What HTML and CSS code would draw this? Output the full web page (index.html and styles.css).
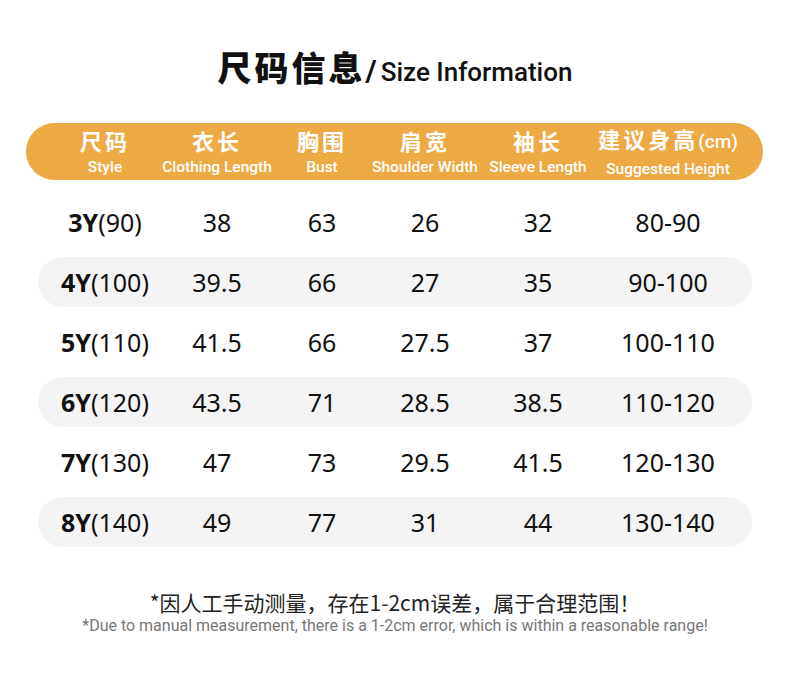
FILE: index.html
```html
<!DOCTYPE html>
<html lang="zh">
<head>
<meta charset="utf-8">
<title>尺码信息</title>
<link rel="stylesheet" href="styles.css">
</head>
<body>
<div class="page">
  <h1 class="title"><span class="title-cn">尺码信息</span><span class="title-slash">/</span><span class="title-en">Size Information</span></h1>

  <div class="head">
    <div class="hcell"><span class="cn">尺码</span><span class="en">Style</span></div>
    <div class="hcell"><span class="cn">衣长</span><span class="en">Clothing Length</span></div>
    <div class="hcell"><span class="cn">胸围</span><span class="en">Bust</span></div>
    <div class="hcell"><span class="cn">肩宽</span><span class="en">Shoulder Width</span></div>
    <div class="hcell"><span class="cn">袖长</span><span class="en">Sleeve Length</span></div>
    <div class="hcell"><span class="cn">建议身高<small>(cm)</small></span><span class="en">Suggested Height</span></div>
  </div>

  <div class="rows">
    <div class="row"><div class="c size"><b>3Y</b>(90)</div><div class="c">38</div><div class="c">63</div><div class="c">26</div><div class="c">32</div><div class="c">80-90</div></div>
    <div class="row alt"><div class="c size"><b>4Y</b>(100)</div><div class="c">39.5</div><div class="c">66</div><div class="c">27</div><div class="c">35</div><div class="c">90-100</div></div>
    <div class="row"><div class="c size"><b>5Y</b>(110)</div><div class="c">41.5</div><div class="c">66</div><div class="c">27.5</div><div class="c">37</div><div class="c">100-110</div></div>
    <div class="row alt"><div class="c size"><b>6Y</b>(120)</div><div class="c">43.5</div><div class="c">71</div><div class="c">28.5</div><div class="c">38.5</div><div class="c">110-120</div></div>
    <div class="row"><div class="c size"><b>7Y</b>(130)</div><div class="c">47</div><div class="c">73</div><div class="c">29.5</div><div class="c">41.5</div><div class="c">120-130</div></div>
    <div class="row alt"><div class="c size"><b>8Y</b>(140)</div><div class="c">49</div><div class="c">77</div><div class="c">31</div><div class="c">44</div><div class="c">130-140</div></div>
  </div>

  <div class="note">
    <p class="note-cn">*因人工手动测量，存在1-2cm误差，属于合理范围！</p>
    <p class="note-en">*Due to manual measurement, there is a 1-2cm error, which is within a reasonable range!</p>
  </div>
</div>
</body>
</html>
```

FILE: styles.css
```css
html, body {
  margin: 0;
  padding: 0;
  background: #ffffff;
}
.page {
  width: 790px;
  height: 698px;
  font-family: "Noto Sans", "Noto Sans CJK SC", sans-serif;
  color: #111;
  overflow: hidden;
}
.title {
  margin: 0;
  padding-top: 50px;
  height: 123px;
  box-sizing: border-box;
  display: flex;
  justify-content: center;
  align-items: baseline;
  font-weight: 700;
  line-height: 1;
  color: #111;
}
.title-cn {
  font-family: "Noto Sans CJK SC", sans-serif;
  font-size: 34px;
  font-weight: 900;
  letter-spacing: 3px;
}
.title-slash {
  font-family: "Roboto", sans-serif;
  font-size: 30px;
  font-weight: 700;
  margin: 0 4px 0 0;
}
.title-en {
  font-family: "Roboto", sans-serif;
  font-size: 26px;
  font-weight: 500;
}
.head {
  margin: 0 27px 0 26px;
  height: 57px;
  border-radius: 29px;
  background: #eda944;
  display: grid;
  grid-template-columns: 134px 90px 120px 86px 140px 120px;
  padding-left: 12px;
  color: #fff;
  align-items: center;
}
.hcell {
  display: flex;
  flex-direction: column;
  align-items: center;
  white-space: nowrap;
}
.hcell .cn {
  font-family: "Noto Sans CJK SC", sans-serif;
  font-size: 22px;
  font-weight: 700;
  letter-spacing: 3px;
  line-height: 28px;
}
.hcell .cn small {
  font-family: "Roboto", sans-serif;
  font-size: 19px;
  font-weight: 500;
  letter-spacing: 0;
}
.hcell .en {
  font-family: "Roboto", sans-serif;
  font-size: 15.5px;
  font-weight: 500;
  line-height: 20px;
  margin-top: 3px;
}
.rows {
  margin: 17px 38px 0 38px;
  display: flex;
  flex-direction: column;
  gap: 10px;
}
.row {
  height: 50px;
  border-radius: 25px;
  display: grid;
  grid-template-columns: 134px 90px 120px 86px 140px 120px;
  align-items: center;
  font-size: 25px;
  color: #111;
}
.row.alt {
  background: #f4f4f4;
}
.c {
  text-align: center;
  white-space: nowrap;
  line-height: 1;
}
.size b {
  font-weight: 700;
}
.note {
  margin-top: 42px;
  text-align: center;
}
.note p {
  margin: 0;
}
.note-cn {
  font-family: "Noto Sans CJK SC", sans-serif;
  font-size: 21px;
  line-height: 26px;
  color: #222;
}
.note-en {
  font-family: "Roboto", sans-serif;
  font-size: 16px;
  line-height: 22px;
  color: #777;
}
```
